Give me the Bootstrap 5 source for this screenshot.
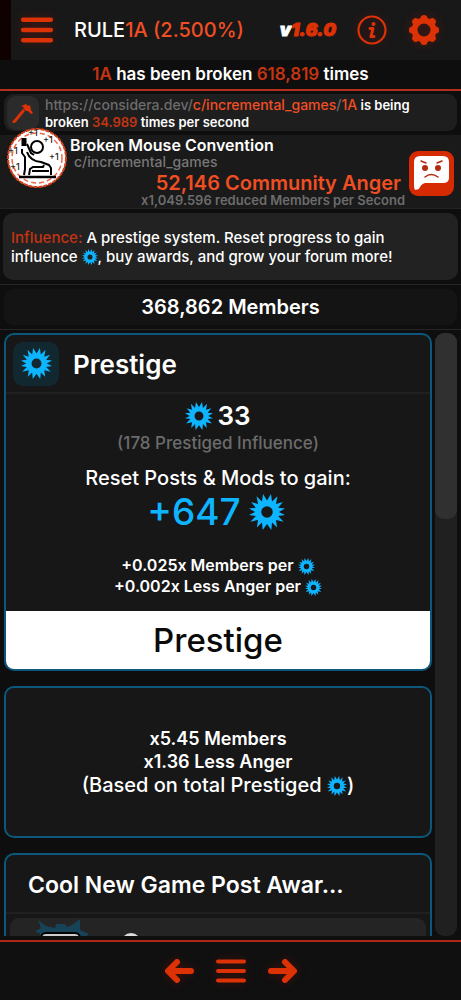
<!DOCTYPE html>
<html lang="en">
<head>
<meta charset="utf-8">
<meta name="viewport" content="width=device-width, initial-scale=1">
<title>Rule 1A</title>
<link href="https://cdn.jsdelivr.net/npm/bootstrap@5.3.0/dist/css/bootstrap.min.css" rel="stylesheet">
<style>
:root { --hot: #dc3206; --hot-text: #f04e23; --hot-dim: #c33412; --sky: #0fb4ff; --edge: #0b587c; }
body { background: #0e0e0e; color: #fff; font-family: Inter, "Liberation Sans", sans-serif; font-weight: 600; font-size: 14px; line-height: 18px; }
.hot { color: var(--hot-text); }
.hot-dim { color: var(--hot-dim); }
.sky { color: var(--sky); }
.dim, .crumb a.dim { color: #6c6c6c; }
.topbar { height: 60px; background: #181818; border-left: 11px solid #100101; padding: 0 21px 0 9px; }
.icon-btn { background: transparent; border: 0; padding: 0; line-height: 0; color: var(--hot); filter: drop-shadow(0 0 5px #d4140044); }
.page-title { font-size: 20px; line-height: 24px; margin: 0 0 0 20px; font-weight: 500; }
.version { font-size: 18px; font-weight: 900; font-style: italic; color: var(--hot); -webkit-text-stroke: 1px currentColor; }
.status { height: 31px; font-size: 17px; line-height: 29px; border-bottom: 2px solid #b5301c; }
.crumb { background: #1e1e1e; border-radius: 9px; margin: 3px 4px 4px; height: 37px; line-height: 17px; font-size: 13px; padding-top: 2px; }
.tool { width: 32px; height: 34px; margin: 0 6px 0 3px; background: #2b2b2b; border-radius: 9px; }
.crumb a { text-decoration: none; font-size: 14px; font-weight: 500; }
.profile { background: #1a1a1a; height: 74px; padding: 0 7px 0 6px; border-bottom: 1px solid #232323; }
.avatar { width: 62px; height: 62px; margin-top: -8px; position: relative; }
.forum-name { font-size: 16px; line-height: 20px; font-weight: 600; margin: 0; padding-left: 2px; }
.forum-path { font-size: 14px; line-height: 14px; padding-left: 6px; color: #777; font-weight: 500; }
.anger { font-size: 20px; line-height: 24px; padding-top: 2px; margin-bottom: -2px; }
.rate { font-size: 13px; line-height: 15px; margin-right: -4px; }
.tip { background: #222; border-radius: 10px; margin: 4px 3px; height: 67px; padding: 0 8px; font-size: 15px; line-height: 19px; font-weight: 500; }
.members { border-top: 1px solid #262626; border-bottom: 1px solid #262626; padding: 4px; font-size: 20px; line-height: 36px; height: 46px; }
.members > div { background: #141414; border-radius: 9px; }
.feed { padding: 3px 4px 4px; gap: 3px; min-height: 0; }
.stack { gap: 15px; }
.panel { background: #171717; border: 2px solid var(--edge); border-radius: 10px; overflow: hidden; }
.panel-top { height: 59px; border-bottom: 2px solid #202020; }
.tile { width: 46px; height: 44px; background: #122830; border-radius: 10px; margin: 0 14px 0 7px; }
.panel-top h2 { font-size: 26px; line-height: 32px; font-weight: 600; margin: 0; padding-top: 2px; }
.panel-top.plain h2 { font-size: 23px; padding-left: 22px; }
.big { font-size: 26px; line-height: 32px; margin-top: 6px; }
.mid { font-size: 17px; line-height: 22px; font-weight: 500; }
.ask { font-size: 20px; line-height: 24px; margin-top: 12px; font-weight: 500; }
.gain { font-size: 37px; line-height: 44px; margin-bottom: 21px; font-weight: 500; gap: 8px; padding-right: 4px; }
.fx { font-size: 16px; line-height: 21px; }
.do-it { background: #fff; color: #0a0a0a; border: 0; height: 58px; font-size: 33px; font-weight: 500; margin-top: 14px; }
.bonus { height: 152px; font-size: 18px; line-height: 23px; }
.bonus .basis { font-size: 20px; line-height: 25px; font-weight: 500; }
.award { background: #242424; border-radius: 9px; margin: 4px; height: 90px; padding-left: 26px; }
.track { width: 22px; background: #202020; border-radius: 9px; }
.thumb { height: 186px; background: #303030; border-radius: 9px; }
.dock { height: 60px; border-top: 2px solid #b02818; background: #101010; gap: 20px; }
</style>
</head>
<body>
<svg class="d-none" aria-hidden="true">
  <symbol id="star" viewBox="-50 -50 100 100"><path fill="currentColor" fill-rule="evenodd" d="M33 0L50 8 31 11 46 27 25 22 28 43 14 29 12 50 0 33-12 50-14 29-28 43-25 22-46 27-31 11-50 8-33 0-50-10-31-12-44-28-25-22-29-44-14-29-11-50 0-32 11-50 14-29 29-44 25-22 44-28 31-12 50-10ZM16 0A16 16 0 1 0-16 0 16 16 0 1 0 16 0Z"/></symbol>
  <symbol id="bars" viewBox="0 0 30 26"><path stroke="currentColor" stroke-width="4" stroke-linecap="round" d="M2 3.500H28M2 13H28M2 22.500H28"/></symbol>
</svg>
<div class="vh-100 d-flex flex-column overflow-hidden">
  <header class="topbar d-flex align-items-center flex-shrink-0">
    <button class="icon-btn" aria-label="Menu"><svg width="34" height="28"><use href="#bars"/></svg></button>
    <h1 class="page-title">RULE<span class="hot">1A (2.500%)</span></h1>
    <div class="d-flex align-items-center ms-auto">
      <span class="version"><span class="text-white">v</span>1.6.0</span>
      <button class="icon-btn ms-3" aria-label="Information"><svg class="ms-1" width="32" height="32" viewBox="0 0 32 32" fill="none" stroke="currentColor"><circle cx="16" cy="16" r="13.500" stroke-width="2.200"/><circle cx="17.500" cy="10" r="2" fill="currentColor" stroke="none"/><path stroke-width="3" stroke-linecap="round" stroke-linejoin="round" d="M14 14.500H17L15 22.500H18"/></svg></button>
      <button class="icon-btn ms-3" aria-label="Settings"><svg class="ms-1" width="32" height="32" viewBox="-16 -16 32 32"><circle r="9.500" fill="none" stroke="currentColor" stroke-width="6"/><path stroke="currentColor" stroke-width="7" stroke-linecap="round" d="M0-11.500V-11.600M0 11.500V11.600M11.500 0H11.600M-11.500 0H-11.600M8.200 8.200 8.300 8.300M-8.200 8.200-8.300 8.300M8.200-8.200 8.300-8.300M-8.200-8.200-8.300-8.300"/></svg></button>
    </div>
  </header>
  <div class="status text-center flex-shrink-0"><span class="hot-dim">1A</span> has been broken <span class="hot-dim">618,819</span> times</div>

  <div class="crumb d-flex flex-shrink-0">
    <div class="tool d-flex align-items-center justify-content-center flex-shrink-0"><svg width="24" height="24" viewBox="0 0 24 24"><path fill="#dc3206" d="M1 21 12 8 14 10 5 21Q3 23 1 21ZM10 5 15 3 17 5 19 4 20 9 22 12 20 13 17 10 15 10 12 7 13 6Z"/></svg></div>
    <div><a href="#" class="dim">https://considera.dev/<span class="hot">c/incremental_games</span>/<span class="hot">1A</span></a> is being<br>broken <span class="hot-dim">34.989</span> times per second</div>
  </div>

  <section class="profile d-flex flex-shrink-0">
    <svg class="avatar flex-shrink-0" viewBox="0 0 62 62"><circle cx="31" cy="31" r="29" fill="#fff" stroke="#d8401c" stroke-width="2" stroke-dasharray="4 1"/><circle cx="31" cy="31" r="25" fill="none" stroke="#e9694a" stroke-width="1.500" stroke-dasharray="5 3"/><g fill="none" stroke="#000" stroke-width="2"><path d="M16 22V26L19 30V42L18 48M21 25Q24 34 35 35L43 38 45 41V48" stroke-linejoin="round"/><circle cx="31" cy="20" r="6"/><path d="M21 17 25 26 28 28M23 48 24 42 27 40H37L38 38M26 44H43"/><path stroke-width="2.500" d="M13 50H50"/><path stroke-width="5" d="M18 11V19"/></g><g font-size="9" font-weight="500" fill="#222"><text x="22" y="9">+1</text><text x="37" y="16">+1</text><text x="43" y="33">+1</text><text x="2" y="27">+1</text><text x="4" y="43">+1</text></g></svg>
    <div class="flex-grow-1">
      <h2 class="forum-name">Broken Mouse Convention</h2>
      <div class="forum-path">c/incremental_games</div>
      <div class="anger hot text-end">52,146 Community Anger</div>
      <div class="rate dim text-end">x1,049.596 reduced Members per Second</div>
    </div>
    <svg class="ms-2 mt-3 flex-shrink-0" width="45" height="45" viewBox="0 0 45 45"><rect width="45" height="45" rx="9" fill="#d62a04"/><path fill="#fff" d="M11 5H34Q40 5 40 11V27Q40 32 34 32H16Q12 33 10 38L6 39Q5 38 5 34V11Q5 5 11 5Z"/><g fill="none" stroke="#b22a10" stroke-width="1.500"><path d="M12 10 17 12M33 10 28 12M16 26Q22 21 29 26" stroke-linecap="round"/></g><circle cx="16" cy="17" r="3" fill="#b22a10"/><circle cx="29" cy="17" r="3" fill="#b22a10"/></svg>
  </section>

  <div class="tip d-flex align-items-center flex-shrink-0"><p class="m-0"><span class="hot-dim">Influence:</span> A prestige system. Reset progress to gain<br>influence <svg class="sky" width="16" height="16"><use href="#star"/></svg>, buy awards, and grow your forum more!</p></div>
  <div class="members text-center flex-shrink-0"><div>368,862 Members</div></div>

  <main class="feed d-flex flex-grow-1">
    <div class="stack flex-grow-1 overflow-hidden d-flex flex-column">
      <section class="panel flex-shrink-0 text-center">
        <div class="panel-top d-flex align-items-center"><div class="tile d-flex align-items-center justify-content-center"><svg class="sky" width="31" height="31"><use href="#star"/></svg></div><h2>Prestige</h2></div>
        <div class="big d-flex align-items-center justify-content-center gap-1"><svg class="sky" width="28" height="28"><use href="#star"/></svg>33</div>
        <div class="mid dim">(178 Prestiged Influence)</div>
        <div class="ask">Reset Posts &amp; Mods to gain:</div>
        <div class="gain sky d-flex align-items-center justify-content-center">+647<svg width="36" height="36"><use href="#star"/></svg></div>
        <div class="fx">+0.025x Members per <svg class="sky" width="17" height="17"><use href="#star"/></svg><br>+0.002x Less Anger per <svg class="sky" width="17" height="17"><use href="#star"/></svg></div>
        <button class="do-it d-block w-100">Prestige</button>
      </section>
      <section class="panel bonus flex-shrink-0 d-flex align-items-center justify-content-center text-center"><div>x5.45 Members<br>x1.36 Less Anger<div class="basis">(Based on total Prestiged <svg class="sky" width="20" height="20"><use href="#star"/></svg>)</div></div></section>
      <section class="panel flex-shrink-0">
        <div class="panel-top plain d-flex align-items-center"><h2>Cool New Game Post Awar...</h2></div>
        <div class="award"><svg width="110" height="60" viewBox="0 0 110 60"><path fill="#174358" d="M2 2 10 8 19 10 20 6H29L31 9 36 7 44 1V12L53 16 48 20H4V15L-2 14 5 10Z"/><rect x="5" y="15" width="39" height="40" rx="5" fill="#ccc" stroke="#000" stroke-width="2"/><circle cx="95" cy="25" r="10" fill="#ddd"/></svg></div>
      </section>
    </div>
    <div class="track flex-shrink-0"><div class="thumb"></div></div>
  </main>

  <nav class="dock d-flex align-items-center justify-content-center flex-shrink-0">
    <button class="icon-btn" aria-label="Previous"><svg width="31" height="26" viewBox="0 0 31 26"><path fill="none" stroke="currentColor" stroke-width="6" stroke-linecap="round" stroke-linejoin="round" d="M27 13H6M13 4 4 13 13 22"/></svg></button>
    <button class="icon-btn" aria-label="List"><svg width="32" height="26"><use href="#bars"/></svg></button>
    <button class="icon-btn" aria-label="Next"><svg width="31" height="26" viewBox="0 0 31 26"><path fill="none" stroke="currentColor" stroke-width="6" stroke-linecap="round" stroke-linejoin="round" d="M4 13H25M18 4 27 13 18 22"/></svg></button>
  </nav>
</div>
<script src="https://cdn.jsdelivr.net/npm/bootstrap@5.3.0/dist/js/bootstrap.bundle.min.js"></script>
</body>
</html>
